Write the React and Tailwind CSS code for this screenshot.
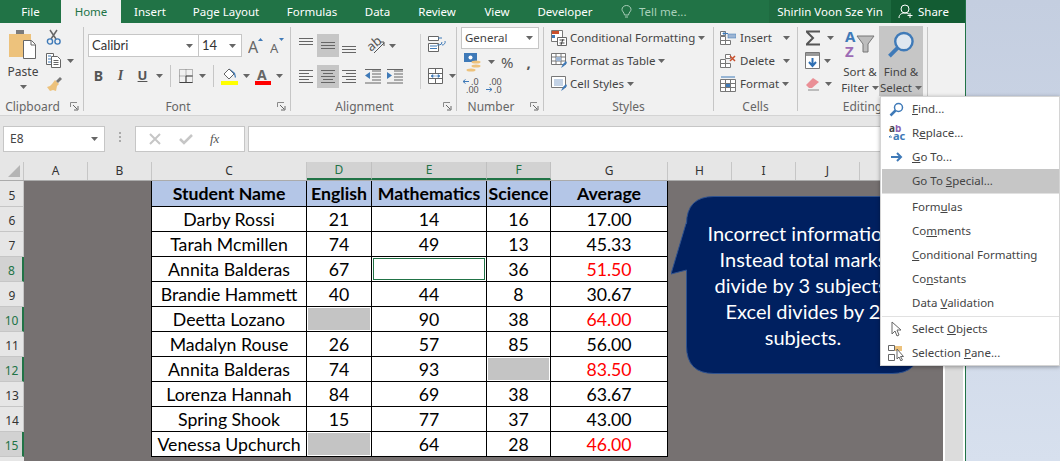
import React from "react";

const ui = "font-['Noto_Sans',sans-serif]";

const students = [
  ["Darby Rossi", "21", "14", "16", "17.00"],
  ["Tarah Mcmillen", "74", "49", "13", "45.33"],
  ["Annita Balderas", "67", "sel", "36", "51.50", true],
  ["Brandie Hammett", "40", "44", "8", "30.67"],
  ["Deetta Lozano", "", "90", "38", "64.00", true],
  ["Madalyn Rouse", "26", "57", "85", "56.00"],
  ["Annita Balderas", "74", "93", "", "83.50", true],
  ["Lorenza Hannah", "84", "69", "38", "63.67"],
  ["Spring Shook", "15", "77", "37", "43.00"],
  ["Venessa Upchurch", "", "64", "28", "46.00", true],
];

const columns = [
  { name: "A", w: "w-[64px]" },
  { name: "B", w: "w-[64px]" },
  { name: "C", w: "w-[155px]" },
  { name: "D", w: "w-[65px]", on: true },
  { name: "E", w: "w-[115px]", on: true },
  { name: "F", w: "w-[64px]", on: true },
  { name: "G", w: "w-[117px]" },
  { name: "H", w: "w-[64px]" },
  { name: "I", w: "w-[64px]" },
  { name: "J", w: "w-[64px]" },
  { name: "K", w: "w-[64px]" },
];

const rowHeads = [
  { n: 5, h: "h-[26px]" },
  { n: 6 }, { n: 7 }, { n: 8, on: true }, { n: 9 }, { n: 10, on: true },
  { n: 11 }, { n: 12, on: true }, { n: 13 }, { n: 14 }, { n: 15, on: true },
];

function Caret({ className = "" }) {
  return (
    <svg width="7" height="4" viewBox="0 0 7 4" className={`shrink-0 ${className}`}>
      <path d="M0 0h7L3.5 4z" fill="#666" />
    </svg>
  );
}

function Launcher() {
  return (
    <svg width="9" height="9" viewBox="0 0 9 9" className="shrink-0">
      <path d="M.5 5V.5H7" fill="none" stroke="#8a8a8a" />
      <path d="M3 3l4 4M8 4v4H4" fill="none" stroke="#666" />
    </svg>
  );
}

function Lines({ rows, w = 14 }) {
  // rows of [x, width, y] for the align buttons
  return (
    <svg width={w} height="15" viewBox={`0 0 ${w} 15`}>
      {rows.map(([x, len, y], i) => (
        <rect key={i} x={x} y={y} width={len} height="1" fill="#666" />
      ))}
    </svg>
  );
}

function Group({ w, label, launcher, children }) {
  return (
    <div className="flex shrink-0">
      <div className={`${w} h-[88px] flex flex-col`}>
        <div className="h-[71px]">{children}</div>
        <div className="h-[17px] flex items-center text-[12px] text-[#666]">
          <div className="flex-1 text-center leading-none">{label}</div>
          {launcher && (
            <div className="w-[18px] flex justify-center">
              <Launcher />
            </div>
          )}
        </div>
      </div>
      <div className="w-px h-[84px] bg-[#c6c6c6]" />
    </div>
  );
}

function ClipboardGroup() {
  return (
    <div className="flex h-full pt-[2px]">
      <div className="w-[46px] flex flex-col items-center">
        <svg width="30" height="31" viewBox="0 0 30 31">
          <path d="M1 5h7V2h8v3h7v23H1z" fill="#edc27c" />
          <rect x="8" y="1" width="8" height="4" fill="#7b7b7b" />
          <path d="M15.5 11.5h8l4 4v14h-12z" fill="#fff" stroke="#666" />
          <path d="M23 12v4h4" fill="none" stroke="#666" />
        </svg>
        <span className="text-[12px] text-[#444] mt-[3px] leading-[18px]">Paste</span>
        <Caret className="mt-[4px]" />
      </div>
      <div className="flex flex-col gap-[8px]">
        <svg width="16" height="16" viewBox="0 0 16 16">
          <path d="M4 1l6 9M11 1L5 10" stroke="#666" strokeWidth="1.5" fill="none" />
          <circle cx="4" cy="12.5" r="2.6" fill="none" stroke="#3f7ab8" strokeWidth="1.4" />
          <circle cx="11.5" cy="12.5" r="2.6" fill="none" stroke="#3f7ab8" strokeWidth="1.4" />
        </svg>
        <div className="flex items-center gap-[5px]">
          <svg width="16" height="15" viewBox="0 0 16 15">
            <path d="M.5.5h7v11h-7z" fill="#fff" stroke="#666" />
            <path d="M5.5 3.5h6l3 3v8h-9z" fill="#fff" stroke="#666" />
            <path d="M2 3h3M2 6h3M2 9h3" stroke="#3f7ab8" />
            <path d="M7.5 7.5h5M7.5 9.5h5M7.5 11.5h5" stroke="#666" />
          </svg>
          <Caret />
        </div>
        <svg width="17" height="16" viewBox="0 0 17 16">
          <path d="M9 4l4 4-2 2-1 5-3-1-3 1-3-4 3-1 2-2z" fill="#edc27c" />
          <path d="M10 5l4-4 2 2-4 4z" fill="#777" />
        </svg>
      </div>
    </div>
  );
}

function FontGroup() {
  return (
    <div className="pl-[4px] pt-[7px]">
      <div className="flex items-center">
        <div className="w-[111px] h-[23px] bg-white border border-[#c6c6c6] flex items-center justify-between pl-[3px] pr-[5px] font-['Lato',sans-serif] text-[13px] text-[#333]">
          Calibri <Caret />
        </div>
        <div className="w-[43px] h-[23px] bg-white border border-l-0 border-[#c6c6c6] flex items-center justify-between pl-[3px] pr-[5px] font-['Lato',sans-serif] text-[13px] text-[#333]">
          14 <Caret />
        </div>
        <svg width="16" height="18" viewBox="0 0 16 18" className="ml-[6px]">
          <text x="0" y="16" fontSize="16" fill="#666" fontFamily="Noto Sans">A</text>
          <path d="M10 4l2.5-3L15 4z" fill="#3f7ab8" />
        </svg>
        <svg width="15" height="16" viewBox="0 0 15 16" className="ml-[6px]">
          <text x="0" y="15" fontSize="13" fill="#666" fontFamily="Noto Sans">A</text>
          <path d="M9 0h5l-2.5 3z" fill="#3f7ab8" />
        </svg>
      </div>
      <div className="flex items-center h-[23px] mt-[7px]">
        <span className="w-[21px] text-center text-[14px] font-bold text-[#555]">B</span>
        <span className="w-[23px] text-center text-[14px] italic font-['Liberation_Serif',serif] font-bold text-[#555]">I</span>
        <span className="w-[21px] text-center text-[13px] font-bold underline text-[#555]">U</span>
        <Caret className="ml-[3px]" />
        <div className="w-px h-[22px] bg-[#c6c6c6] ml-[7px]" />
        <svg width="14" height="14" viewBox="0 0 14 14" className="ml-[8px]">
          <path d="M.5.5h13v13H.5zM7 .5v13M.5 7h13" fill="none" stroke="#777" strokeDasharray="1 1" />
          <path d="M.5 13.5h13M7 7v6.5M7 7h6.5" fill="none" stroke="#444" />
        </svg>
        <Caret className="ml-[6px]" />
        <div className="w-px h-[22px] bg-[#c6c6c6] ml-[7px]" />
        <svg width="17" height="18" viewBox="0 0 17 18" className="ml-[7px]">
          <path d="M3 7l5-5 5 5-5 5z" fill="#fff" stroke="#666" />
          <path d="M8 1l6 5 1 4-1 1-1-4z" fill="#3f7ab8" />
          <rect y="14" width="17" height="4" fill="#ffff00" />
        </svg>
        <Caret className="ml-[5px]" />
        <svg width="16" height="18" viewBox="0 0 16 18" className="ml-[5px]">
          <text x="2" y="13" fontSize="14" fontWeight="700" fill="#666" fontFamily="Noto Sans">A</text>
          <rect y="14" width="16" height="4" fill="#ff0000" />
        </svg>
        <Caret className="ml-[5px]" />
      </div>
    </div>
  );
}

function AlignBtn({ on, children }) {
  return (
    <div className={`w-[22px] h-[23px] flex items-center justify-center ${on ? "bg-[#c6c6c6]" : ""}`}>
      {children}
    </div>
  );
}

function AlignmentGroup() {
  return (
    <div className="flex pl-[4px] pt-[7px]">
      <div className="grid grid-cols-3 gap-y-[8px] h-[54px]">
        <AlignBtn><Lines rows={[[0, 14, 0], [0, 14, 3], [0, 14, 6]]} /></AlignBtn>
        <AlignBtn on><Lines rows={[[0, 14, 4], [0, 14, 7], [0, 14, 10]]} /></AlignBtn>
        <AlignBtn><Lines rows={[[0, 14, 8], [0, 14, 11], [0, 14, 14]]} /></AlignBtn>
        <AlignBtn><Lines rows={[[0, 14, 1], [0, 10, 4], [0, 14, 7], [0, 10, 10], [0, 14, 13]]} /></AlignBtn>
        <AlignBtn on><Lines rows={[[0, 14, 1], [2, 10, 4], [0, 14, 7], [2, 10, 10], [0, 14, 13]]} /></AlignBtn>
        <AlignBtn><Lines rows={[[0, 14, 1], [4, 10, 4], [0, 14, 7], [4, 10, 10], [0, 14, 13]]} /></AlignBtn>
      </div>
      <div className="w-[51px] ml-[6px]">
        <div className="flex items-center h-[23px] gap-[4px]">
          <svg width="19" height="17" viewBox="0 0 19 17">
            <text x="1" y="12" fontSize="13" fill="#555" fontFamily="Noto Sans" transform="rotate(-40 7 8)">ab</text>
            <path d="M8 16L18 6M14 5h4v4" fill="none" stroke="#555" />
          </svg>
          <Caret />
        </div>
        <div className="flex items-center h-[23px] mt-[8px] gap-[6px] -ml-[1px]">
          <svg width="16" height="15" viewBox="0 0 16 15">
            <path d="M7 2h9M7 5h9M7 8h9M7 11h9M0 14h16M0 .5h16" stroke="#666" />
            <path d="M0 6.5L5 3v7z" fill="#3f7ab8" />
          </svg>
          <svg width="16" height="15" viewBox="0 0 16 15">
            <path d="M7 2h9M7 5h9M7 8h9M7 11h9M0 14h16M0 .5h16" stroke="#666" />
            <path d="M5 6.5L0 3v7z" fill="#3f7ab8" />
          </svg>
        </div>
      </div>
      <div className="w-px h-[55px] bg-[#d0d0d0] ml-[4px]" />
      <div className="ml-[7px] pt-[2px]">
        <svg width="18" height="16" viewBox="0 0 18 16">
          <path d="M.5.5h10v4H.5zM.5 7.5h10v8H.5z" fill="#fff" stroke="#666" />
          <path d="M2 10h7M2 12.5h7" stroke="#3f7ab8" />
          <path d="M10 2h4M14 6a3 3 0 0 1-3 3H9" fill="none" stroke="#3f7ab8" />
          <path d="M17 5a3 3 0 0 1-3 4" fill="none" stroke="#3f7ab8" />
        </svg>
        <div className="flex items-center gap-[6px] mt-[16px]">
          <svg width="15" height="16" viewBox="0 0 15 16">
            <path d="M.5.5h14v15H.5zM.5 5.5h14M.5 10.5h14M7.5.5v5M7.5 10.5v5" fill="#fff" stroke="#666" />
            <path d="M3 8h9M3 8l2-1.5v3zM12 8l-2-1.5v3z" fill="#3f7ab8" stroke="#3f7ab8" strokeWidth=".6" />
          </svg>
          <Caret />
        </div>
      </div>
    </div>
  );
}

function NumberGroup() {
  return (
    <div className="pl-[4px]">
      <div className="w-[78px] h-[22px] bg-white border border-[#c6c6c6] flex items-center justify-between pl-[3px] pr-[5px] text-[11.5px] text-[#444]">
        General <Caret />
      </div>
      <div className="flex items-center h-[22px] mt-[2px] pl-[3px]">
        <svg width="18" height="19" viewBox="0 0 18 19">
          <rect width="13" height="9" fill="#3f7ab8" />
          <circle cx="6.5" cy="4.5" r="2" fill="#fff" />
          <ellipse cx="12" cy="9" rx="4.5" ry="1.5" fill="#edc27c" />
          <ellipse cx="12" cy="13" rx="4.5" ry="1.5" fill="#edc27c" />
          <ellipse cx="7" cy="17" rx="4.5" ry="1.5" fill="#edc27c" />
        </svg>
        <Caret className="ml-[6px]" />
        <span className="ml-[6px] text-[15px] text-[#555]">%</span>
        <span className="ml-[13px] text-[15px] font-bold text-[#555] leading-none">,</span>
      </div>
      <div className="flex items-center mt-[5px] pl-[2px] gap-[7px]">
        <svg width="16" height="15" viewBox="0 0 16 15">
          <path d="M0 3.5h6M0 3.5l2.500-2M0 3.5l2.500 2" stroke="#3f7ab8" fill="none" />
          <text x="8" y="7" fontSize="9" fill="#555" fontFamily="Noto Sans">.0</text>
          <text x="3" y="15" fontSize="9" fill="#555" fontFamily="Noto Sans">.00</text>
        </svg>
        <svg width="16" height="15" viewBox="0 0 16 15">
          <text x="3" y="7" fontSize="9" fill="#555" fontFamily="Noto Sans">.00</text>
          <path d="M0 11.500h6M6 11.500l-2.500-2M6 11.500l-2.500 2" stroke="#3f7ab8" fill="none" />
          <text x="8" y="15" fontSize="9" fill="#555" fontFamily="Noto Sans">.0</text>
        </svg>
      </div>
    </div>
  );
}

function IconRow({ icon, label, gap = "ml-[3px]", caretGap = "ml-[3px]" }) {
  return (
    <div className="h-[23px] flex items-center text-[11.5px] text-[#444] whitespace-nowrap">
      {icon}
      <span className={gap}>{label}</span>
      <Caret className={caretGap} />
    </div>
  );
}

function StylesGroup() {
  const cf = (
    <svg width="16" height="16" viewBox="0 0 16 16">
      <path d="M.5.5h11v11H.5z" fill="#fff" stroke="#777" />
      <rect x="1" y="1" width="7" height="3" fill="#c9502e" />
      <rect x="1" y="5" width="3" height="3" fill="#3f7ab8" />
      <path d="M6.5 7.500h9v8h-9z" fill="#fff" stroke="#666" />
      <path d="M8.500 10h5M8.500 13h5M12 9l-2 6" stroke="#444" />
    </svg>
  );
  const table = (
    <svg width="16" height="16" viewBox="0 0 16 16">
      <path d="M.5.5h14v11H.5zM.5 4h14M.5 8h14M5 .5v11M10 .5v11" fill="#fff" stroke="#777" />
      <rect x="5" y="4" width="5" height="4" fill="#9db5d3" />
      <path d="M10 15l2-4 3-3 1 2-3 3z" fill="#3f7ab8" />
    </svg>
  );
  const styles = (
    <svg width="16" height="16" viewBox="0 0 16 16">
      <path d="M.5.5h14v11H.5z" fill="#fff" stroke="#777" />
      <rect x="3" y="3" width="9" height="7" fill="#c3d2e5" />
      <path d="M10 15l2-4 3-3 1 2-3 3z" fill="#3f7ab8" />
    </svg>
  );
  return (
    <div className="pl-[7px] -mt-[1px]">
      <IconRow icon={cf} label="Conditional Formatting" />
      <IconRow icon={table} label="Format as Table" />
      <IconRow icon={styles} label="Cell Styles" />
    </div>
  );
}

function CellsGroup() {
  const base = "M.5 4.500h5v4h-5zM.5 8.500h5v4h-5zM5.500 8.500h5v4h-5z";
  return (
    <div className="pl-[6px] -mt-[1px]">
      <IconRow
        label="Insert"
        gap="ml-[4px]"
        caretGap="ml-[11px]"
        icon={
          <svg width="16" height="16" viewBox="0 0 16 16">
            <path d="M.5 6.500h5v4h-5zM.5 10.500h5v4h-5zM5.500 10.500h5v4h-5zM.5 1.500h5v4h-5z" fill="#fff" stroke="#777" />
            <rect x="8" y="4" width="8" height="4" fill="#9db5d3" stroke="#3f7ab8" strokeWidth=".5" />
            <path d="M3 3.500h5M3 3.500l2-2M3 3.500l2 2" stroke="#3f7ab8" fill="none" />
          </svg>
        }
      />
      <IconRow
        label="Delete"
        gap="ml-[4px]"
        caretGap="ml-[8px]"
        icon={
          <svg width="16" height="16" viewBox="0 0 16 16">
            <path d={base} fill="#fff" stroke="#777" transform="translate(0 2)" />
            <path d="M5.500 1.500h5v4h-5z" fill="#fff" stroke="#777" />
            <path d="M10 3l5 5M15 3l-5 5" stroke="#c9502e" strokeWidth="1.5" />
          </svg>
        }
      />
      <IconRow
        label="Format"
        gap="ml-[4px]"
        caretGap="ml-[3px]"
        icon={
          <svg width="16" height="16" viewBox="0 0 16 16">
            <path d="M.5 3.500h15v12H.5zM.5 7.500h15M.5 11.500h15M5.500 3.500v12M10.500 3.500v12" fill="#fff" stroke="#777" />
            <rect x="6" y="8" width="4" height="3" fill="#3f7ab8" />
            <path d="M1 1h14" stroke="#3f7ab8" />
          </svg>
        }
      />
    </div>
  );
}

function EditingGroup() {
  return (
    <div className="flex h-full">
      <div className="w-[43px] pl-[7px] flex flex-col -mt-[1px]">
        <div className="h-[23px] flex items-center gap-[6px]">
          <svg width="16" height="16" viewBox="0 0 16 16">
            <path d="M1 1.500h14M1 14.500h14M2 2l6 6-6 6" fill="none" stroke="#555" strokeWidth="2" />
          </svg>
          <Caret />
        </div>
        <div className="h-[23px] flex items-center gap-[4px]">
          <svg width="15" height="17" viewBox="0 0 15 17">
            <path d="M.5.500h14v16H.5z" fill="#fff" stroke="#777" />
            <rect x="1" y="1" width="13" height="3" fill="#999" />
            <path d="M7.500 6v8M4 10l3.500 4L11 10" fill="none" stroke="#2f6fb3" strokeWidth="2" />
          </svg>
          <Caret />
        </div>
        <div className="h-[23px] flex items-center gap-[4px]">
          <svg width="16" height="15" viewBox="0 0 16 15">
            <path d="M1 9l7-7 6 4-7 6H4z" fill="#ea8f96" />
            <path d="M3 14h11" stroke="#888" />
          </svg>
          <Caret />
        </div>
      </div>
      <div className="w-[38px] flex flex-col items-center pt-[2px] text-[11.5px] text-[#444]">
        <svg width="32" height="29" viewBox="0 0 32 29">
          <text x="1" y="13" fontSize="15" fontWeight="700" fill="#3f7ab8" fontFamily="Noto Sans">A</text>
          <text x="1" y="28" fontSize="15" fontWeight="700" fill="#9c6bb5" fontFamily="Noto Sans">Z</text>
          <path d="M13 7h17l-6 8v8h-5v-8z" fill="#bdbdbd" stroke="#777" />
        </svg>
        <span className="leading-[16px] mt-[6px] whitespace-nowrap">Sort &amp;</span>
        <span className="leading-[16px] flex items-center gap-[3px] whitespace-nowrap">
          Filter <Caret />
        </span>
      </div>
      <div className="w-[44px] h-[70px] -mt-[1px] bg-[#c6c6c6] flex flex-col items-center pt-[5px] text-[11.5px] text-[#444]">
        <svg width="28" height="28" viewBox="0 0 28 28">
          <circle cx="17" cy="11" r="9" fill="#dfe7f0" stroke="#3f7ab8" strokeWidth="2.500" />
          <path d="M10.500 17.500L2 26" stroke="#3f7ab8" strokeWidth="4" />
        </svg>
        <span className="leading-[16px] mt-[6px] whitespace-nowrap">Find &amp;</span>
        <span className="leading-[16px] flex items-center gap-[3px] whitespace-nowrap">
          Select <Caret />
        </span>
      </div>
    </div>
  );
}

function TitleBar() {
  const tabs = [
    ["Insert", "w-[58px]"],
    ["Page Layout", "w-[94px]"],
    ["Formulas", "w-[78px]"],
    ["Data", "w-[53px]"],
    ["Review", "w-[66px]"],
    ["View", "w-[54px]"],
    ["Developer", "w-[82px]"],
  ];
  return (
    <div className="h-[23px] bg-[#217346] flex items-center text-[11.5px] text-white">
      <div className="w-[61px] text-center">File</div>
      <div className="w-[60px] h-full bg-[#f1f1f1] text-[#217346] flex items-center justify-center">Home</div>
      {tabs.map(([name, w]) => (
        <div key={name} className={`${w} text-center shrink-0`}>{name}</div>
      ))}
      <svg width="11" height="14" viewBox="0 0 11 14" className="ml-[15px]">
        <path d="M3.500 10C3 7 1 6.500 1 4.500a4.500 4 0 0 1 9 0C10 6.500 8 7 7.500 10zM4 12h3" fill="none" stroke="#a9cdb8" />
      </svg>
      <span className="ml-[7px] text-[#a9d1ba]">Tell me...</span>
      <div className="ml-auto w-[122px] h-full bg-[#1e6b40] flex items-center justify-center whitespace-nowrap">Shirlin Voon Sze Yin</div>
      <div className="w-[74px] h-full bg-[#135c33] flex items-center pl-[7px] gap-[4px]">
        <svg width="16" height="15" viewBox="0 0 16 15">
          <circle cx="7" cy="5" r="4" fill="none" stroke="#fff" />
          <path d="M1 14c0-4 3-5 6-5 1.500 0 3 .3 4 1.200M12 9v5M9.500 11.500h5" fill="none" stroke="#fff" />
        </svg>
        Share
      </div>
    </div>
  );
}

function Ribbon() {
  return (
    <div className="h-[93px] bg-[#f1f1f1] border-b border-[#d4d4d4] pt-[4px] flex">
      <Group w="w-[83px]" label="Clipboard" launcher><ClipboardGroup /></Group>
      <Group w="w-[206px]" label="Font" launcher><FontGroup /></Group>
      <Group w="w-[165px]" label="Alignment" launcher><AlignmentGroup /></Group>
      <Group w="w-[86px]" label="Number" launcher><NumberGroup /></Group>
      <Group w="w-[169px]" label="Styles"><StylesGroup /></Group>
      <Group w="w-[83px]" label="Cells"><CellsGroup /></Group>
      <Group w="w-[129px]" label="Editing"><EditingGroup /></Group>
    </div>
  );
}

function FormulaBar() {
  return (
    <div className="h-[46px] shrink-0 bg-[#e6e6e6] flex items-start pt-[10px] text-[12px] text-[#444] pr-[3px]">
      <div className="ml-[3px] w-[102px] h-[26px] bg-white border border-[#c6c6c6] flex items-center justify-between pl-[6px] pr-[6px]">
        E8 <Caret />
      </div>
      <div className="w-[30px] flex flex-col items-center gap-[2px] pt-[6px]">
        <div className="w-[2px] h-[2px] bg-[#aaa]" />
        <div className="w-[2px] h-[2px] bg-[#aaa]" />
        <div className="w-[2px] h-[2px] bg-[#aaa]" />
      </div>
      <div className="w-[110px] h-[26px] bg-white border border-[#c6c6c6] flex items-center">
        <svg width="12" height="12" viewBox="0 0 12 12" className="ml-[13px]">
          <path d="M1 1l10 10M11 1L1 11" stroke="#c6c6c6" strokeWidth="2" />
        </svg>
        <svg width="14" height="12" viewBox="0 0 14 12" className="ml-[18px]">
          <path d="M1 6l4 4 8-8" fill="none" stroke="#c6c6c6" strokeWidth="2.500" />
        </svg>
        <span className="ml-[17px] font-['Liberation_Serif',serif] italic text-[13px] text-[#555]">fx</span>
      </div>
      <div className="ml-[3px] flex-1 h-[26px] bg-white border border-[#c6c6c6]" />
    </div>
  );
}

function Cell({ w, value, red, bold, blue }) {
  const gray = value === "";
  const sel = value === "sel";
  return (
    <div
      className={`${w} shrink-0 h-full border-r border-b border-black flex items-center justify-center whitespace-nowrap ${
        gray || sel ? "p-px" : "pt-[2px]"
      } ${blue ? "bg-[#b4c6e7]" : "bg-white"} ${bold ? "font-bold" : ""} ${red ? "text-[#ff0000]" : "text-black"}`}
    >
      {gray && <div className="w-full h-full bg-[#c4c4c4]" />}
      {sel && <div className="w-full h-full border border-[#217346]" />}
      {!gray && !sel && value}
    </div>
  );
}

function Sheet() {
  return (
    <div className="flex-1 flex flex-col overflow-hidden">
      <div className="h-[19px] shrink-0 flex bg-[#e6e6e6] border-b border-[#ababab] text-[12px]">
        <div className="w-[24px] shrink-0 flex items-end justify-end pr-[3px] pb-[3px] border-r border-[#c6c6c6]">
          <div className="w-0 h-0 border-l-[12px] border-l-transparent border-b-[12px] border-b-[#b5b5b5]" />
        </div>
        {columns.map((c) => (
          <div
            key={c.name}
            className={`${c.w} shrink-0 flex items-center justify-center border-r ${
              c.on
                ? "bg-[#d2d2d2] text-[#217346] border-[#c0c0c0] border-b-2 border-b-[#217346]"
                : "text-[#333] border-[#c6c6c6]"
            }`}
          >
            {c.name}
          </div>
        ))}
      </div>
      <div className="flex flex-1 min-h-0">
        <div className="w-[24px] shrink-0 text-[12px]">
          {rowHeads.map((r) => (
            <div
              key={r.n}
              className={`${r.h || "h-[25px]"} flex items-end justify-center pb-[1px] pl-[1px] border-b border-[#c6c6c6] ${
                r.on
                  ? "bg-[#d2d2d2] text-[#217346] border-r-2 border-r-[#217346]"
                  : "bg-[#e6e6e6] text-[#333] border-r border-r-[#c6c6c6]"
              }`}
            >
              {r.n}
            </div>
          ))}
          <div className="h-[10px] bg-[#e6e6e6]" />
        </div>
        <div className="flex-1 bg-[#767171] pl-[127px] font-['Lato',sans-serif] text-[17.7px]">
          <div className="w-[517px] border-l border-black">
            <div className="flex h-[26px]">
              <Cell w="w-[155px]" value="Student Name" bold blue />
              <Cell w="w-[65px]" value="English" bold blue />
              <Cell w="w-[115px]" value="Mathematics" bold blue />
              <Cell w="w-[64px]" value="Science" bold blue />
              <Cell w="w-[117px]" value="Average" bold blue />
            </div>
            {students.map((s, i) => (
              <div key={i} className="flex h-[25px]">
                <Cell w="w-[155px]" value={s[0]} />
                <Cell w="w-[65px]" value={s[1]} />
                <Cell w="w-[115px]" value={s[2]} />
                <Cell w="w-[64px]" value={s[3]} />
                <Cell w="w-[117px]" value={s[4]} red={s[5]} />
              </div>
            ))}
          </div>
        </div>
        <div className="w-[2px] bg-white" />
        <div className="w-[18px] bg-[#dcdcdc]" />
        <div className="w-[2px] bg-white" />
      </div>
    </div>
  );
}

function Callout() {
  return (
    <div className="absolute left-[671px] top-[196px] w-[249px] h-[178px]">
      <svg width="249" height="178" viewBox="0 0 249 178" className="absolute inset-0">
        <path
          d="M15.500 28Q15.500.500 43 .500H221Q248.500.500 248.500 28V150Q248.500 177.500 221 177.500H43Q15.500 177.500 15.500 150V74L0 78 15.500 26z"
          fill="#002060"
          stroke="#2f528f"
        />
      </svg>
      <div className="absolute left-[15px] top-[24px] w-[234px] text-center text-white font-['Lato',sans-serif] text-[20px] leading-[26px] whitespace-nowrap">
        Incorrect information:
        <br />
        Instead total marks
        <br />
        divide by 3 subjects,
        <br />
        Excel divides by 2
        <br />
        subjects.
      </div>
    </div>
  );
}

function MenuItem({ icon, children, on }) {
  return (
    <div className={`h-[24px] flex items-center ${on ? "bg-[#c6c6c6] ml-px" : ""}`}>
      <div className={`${on ? "w-[30px]" : "w-[31px]"} flex justify-center`}>{icon}</div>
      <span className="whitespace-nowrap">{children}</span>
    </div>
  );
}

function FindMenu() {
  const pointer = (
    <svg width="11" height="16" viewBox="0 0 11 16">
      <path d="M1 1v12l3-3 2 5 2-1-2-5h4z" fill="#fff" stroke="#666" />
    </svg>
  );
  return (
    <div className={`absolute left-[880px] top-[96px] w-[180px] h-[270px] bg-white border border-[#d4d4d4] text-[11.5px] text-[#444] shadow-[0_1px_4px_rgba(0,0,0,0.35)] ${ui}`}>
      <MenuItem
        icon={
          <svg width="15" height="15" viewBox="0 0 15 15">
            <circle cx="9.500" cy="5.500" r="4" fill="#fff" stroke="#3f7ab8" strokeWidth="1.500" />
            <path d="M6.500 8.500L1.500 13.500" stroke="#3f7ab8" strokeWidth="2.500" />
          </svg>
        }
      >
        <u>F</u>ind...
      </MenuItem>
      <MenuItem
        icon={
          <svg width="18" height="16" viewBox="0 0 18 16">
            <text x="1" y="7" fontSize="10" fontWeight="700" fill="#444" fontFamily="Noto Sans">a</text>
            <text x="7" y="7" fontSize="10" fontWeight="700" fill="#8a5fb0" fontFamily="Noto Sans">b</text>
            <text x="5" y="15" fontSize="11" fontWeight="700" fill="#3f7ab8" fontFamily="Noto Sans">ac</text>
            <path d="M1 12h3M1 12l1.500-1.500" stroke="#3f7ab8" fill="none" />
          </svg>
        }
      >
        R<u>e</u>place...
      </MenuItem>
      <MenuItem
        icon={
          <svg width="12" height="10" viewBox="0 0 12 10">
            <path d="M0 5h10M6 1l4 4-4 4" fill="none" stroke="#3f7ab8" strokeWidth="2" />
          </svg>
        }
      >
        <u>G</u>o To...
      </MenuItem>
      <MenuItem on>
        Go To <u>S</u>pecial...
      </MenuItem>
      <div className="h-px bg-[#e1e1e1] ml-[1px] mb-[1px]" />
      <MenuItem>Form<u>u</u>las</MenuItem>
      <MenuItem>Co<u>m</u>ments</MenuItem>
      <MenuItem><u>C</u>onditional Formatting</MenuItem>
      <MenuItem>Co<u>n</u>stants</MenuItem>
      <MenuItem>Data <u>V</u>alidation</MenuItem>
      <div className="h-px bg-[#e1e1e1] ml-[1px] mt-[1px]" />
      <MenuItem icon={pointer}>Select <u>O</u>bjects</MenuItem>
      <MenuItem
        icon={
          <svg width="17" height="16" viewBox="0 0 17 16">
            <path d="M.5.500h6v5h-6zM.5 9.500h6v6h-6z" fill="#fff" stroke="#666" />
            <rect x="7" y="1" width="7" height="5" fill="#edc27c" />
            <path d="M9 4v10l2-2 2 4 1.500-1-2-3.500h3z" fill="#fff" stroke="#666" />
          </svg>
        }
      >
        Selection <u>P</u>ane...
      </MenuItem>
    </div>
  );
}

export default function App() {
  return (
    <div className={`relative w-[1060px] h-[461px] overflow-hidden flex bg-linear-to-b from-[#c4cee0] to-[#d7e0ee] ${ui}`}>
      <div className="w-[965px] h-full flex flex-col shrink-0 overflow-hidden">
        <TitleBar />
        <Ribbon />
        <FormulaBar />
        <Sheet />
      </div>
      <div className="w-px h-full bg-[#217346]" />
      <Callout />
      <FindMenu />
    </div>
  );
}
